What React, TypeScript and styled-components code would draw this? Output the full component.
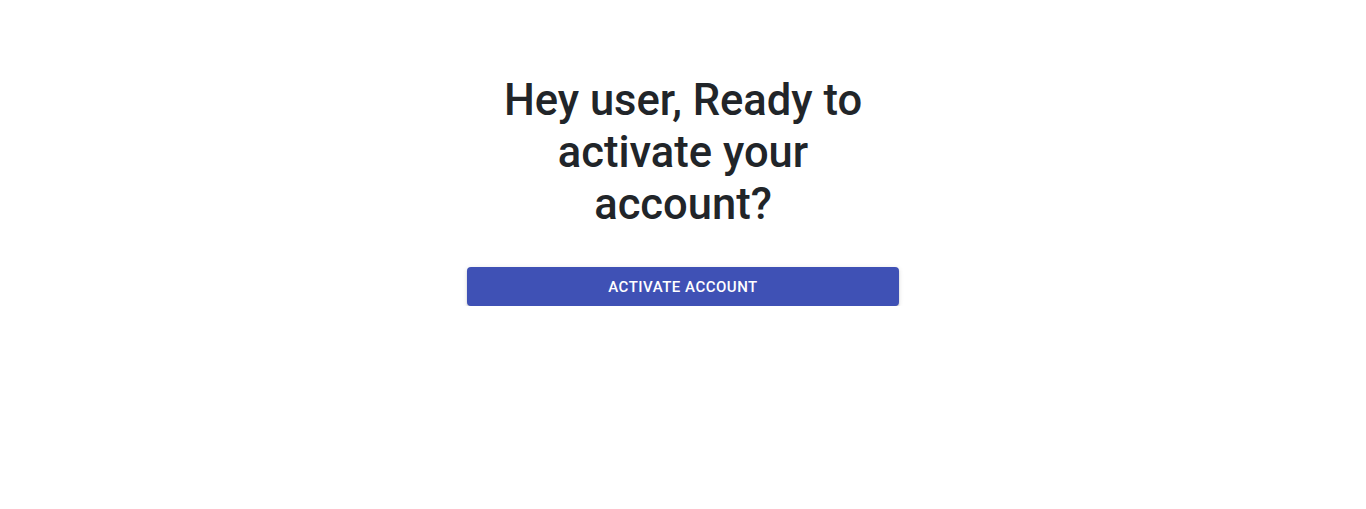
import React from "react";
import styled, { createGlobalStyle } from "styled-components";

const Global = createGlobalStyle`
  html, body { margin: 0; padding: 0; background: #fff; }
  body { font-family: Roboto, "Helvetica Neue", Arial, sans-serif; }
`;

const Page = styled.main`
  display: flex;
  justify-content: center;
  padding-top: 75px;
`;

const Card = styled.section`
  width: 432px;
  display: flex;
  flex-direction: column;
  align-items: stretch;
`;

const Title = styled.h1`
  margin: 0 0 36px;
  font-family: Roboto, sans-serif;
  font-weight: 500;
  font-size: 43.5px;
  line-height: 52px;
  text-align: center;
  color: #212529;
`;

const Button = styled.button`
  height: 39px;
  border: none;
  border-radius: 4px;
  background: #3f51b5;
  color: #fff;
  font-family: Roboto, sans-serif;
  font-weight: 500;
  font-size: 15px;
  letter-spacing: 0.5px;
  text-transform: uppercase;
  cursor: pointer;
  box-shadow: 0px 3px 1px -2px rgba(0,0,0,0.2), 0px 2px 2px 0px rgba(0,0,0,0.14), 0px 1px 5px 0px rgba(0,0,0,0.12);
`;

export default function App() {
  return (
    <>
      <Global />
      <Page>
        <Card>
          <Title>Hey user, Ready to activate your account?</Title>
          <Button>Activate Account</Button>
        </Card>
      </Page>
    </>
  );
}
